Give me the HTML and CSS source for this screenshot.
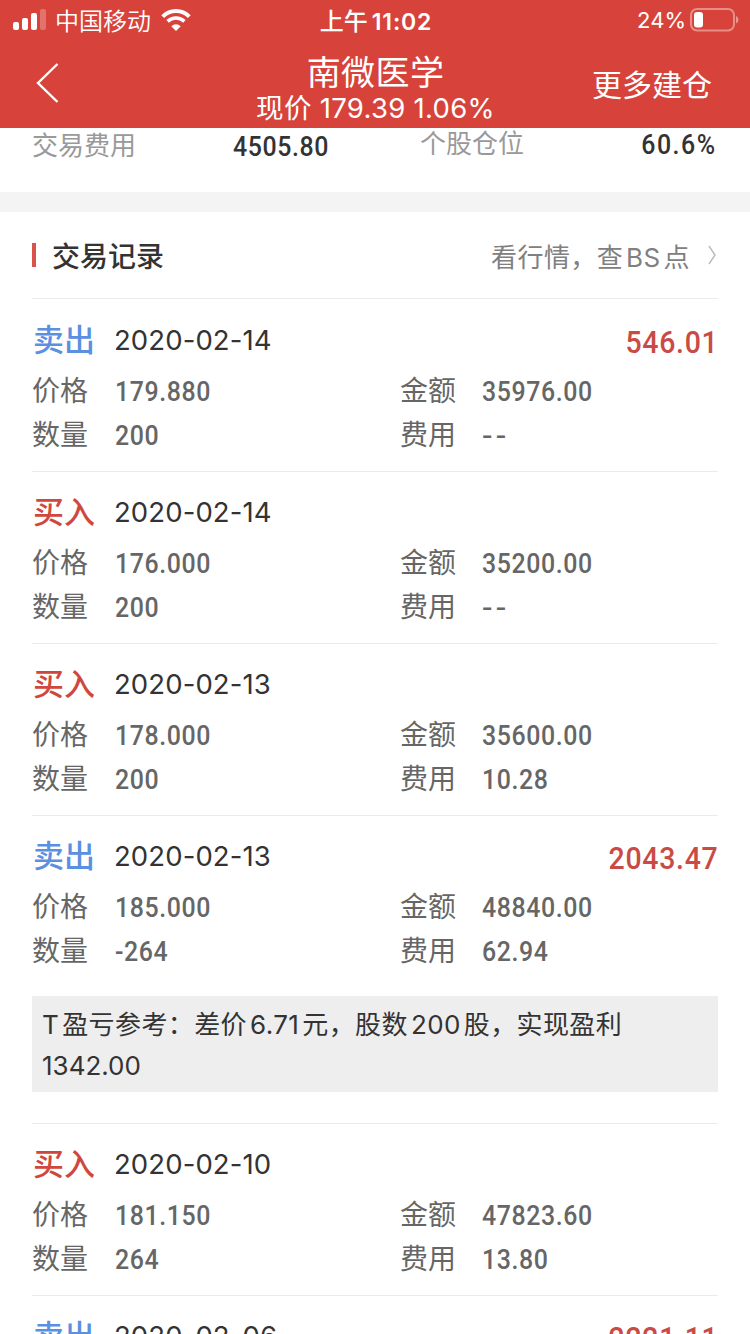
FILE: index.html
```html
<!DOCTYPE html>
<html lang="zh-CN">
  <head>
    <meta charset="UTF-8" />
    <meta name="viewport" content="width=device-width, initial-scale=1.0" />
    <title>南微医学</title>
    <link rel="stylesheet" href="styles.css">
  </head>
  <body>
    <header class="header">
      <div class="status-bar">
        <div class="status-left">
          <svg class="signal" width="34" height="22" viewBox="0 0 34 22" fill="#fff">
            <rect x="0" y="13" width="6" height="8" rx="2" />
            <rect x="9" y="9" width="6" height="12" rx="2" />
            <rect x="18" y="4" width="6" height="17" rx="2" />
            <rect x="27" y="0" width="6" height="21" rx="2" opacity="0.25" />
          </svg>
          <span class="carrier">中国移动</span>
          <svg class="wifi" width="30" height="22" viewBox="0 0 30 22">
            <path d="M1.7 7.6 A18.8 18.8 0 0 1 28.3 7.6" fill="none" stroke="#fff" stroke-width="4" />
            <path d="M6.6 12.4 A12 12 0 0 1 23.4 12.4" fill="none" stroke="#fff" stroke-width="3.6" />
            <path d="M15 22 L10.3 17.3 A6.7 6.7 0 0 1 19.7 17.3 Z" fill="#fff" />
          </svg>
        </div>
        <div class="status-time"><span class="ampm">上午</span>11:02</div>
        <div class="status-right">
          <span>24%</span>
          <svg width="49" height="24" viewBox="0 0 49 24">
            <rect x="1" y="1" width="43" height="21.5" rx="6" fill="none" stroke="#fff" stroke-opacity="0.4" stroke-width="2" />
            <rect x="4" y="4" width="9" height="15.5" rx="3" fill="#fff" />
            <path d="M46 8 Q48.5 9 48.5 11.7 Q48.5 14.5 46 15.5 Z" fill="#fff" opacity="0.45" />
          </svg>
        </div>
      </div>
      <div class="nav-bar">
        <svg class="back" width="24" height="42" viewBox="0 0 24 42">
          <path d="M22.5 2 L3 21 L22.5 40" fill="none" stroke="#fff" stroke-width="2.4" />
        </svg>
        <div class="nav-title">
          <div class="stock-name">南微医学</div>
          <div class="stock-price">现价 179.39 1.06%</div>
        </div>
        <div class="nav-action">更多建仓</div>
      </div>
    </header>

    <div class="summary">
      <span class="summary-label">交易费用</span>
      <span class="summary-value num">4505.80</span>
      <span class="summary-label up">个股仓位</span>
      <span class="summary-value num right up">60.6%</span>
    </div>

    <div class="records">
      <div class="records-header">
        <h2>交易记录</h2>
        <div class="quote-link">
          <span>看行情，查<span class="latin">BS</span>点</span>
          <svg width="10" height="20" viewBox="0 0 10 20">
            <path d="M1 1 L7 10 L1 19" fill="none" stroke="#bbb" stroke-width="1.4" />
          </svg>
        </div>
      </div>

      <div class="record">
        <div class="record-top">
          <span class="type sell">卖出</span>
          <span class="date">2020-02-14</span>
          <span class="profit num right">546.01</span>
        </div>
        <div class="record-grid">
          <span>价格</span><span class="num">179.880</span><span>金额</span><span class="num">35976.00</span>
          <span>数量</span><span class="num">200</span><span>费用</span><span class="num none">--</span>
        </div>
      </div>

      <div class="record">
        <div class="record-top">
          <span class="type buy">买入</span>
          <span class="date">2020-02-14</span>
        </div>
        <div class="record-grid">
          <span>价格</span><span class="num">176.000</span><span>金额</span><span class="num">35200.00</span>
          <span>数量</span><span class="num">200</span><span>费用</span><span class="num none">--</span>
        </div>
      </div>

      <div class="record">
        <div class="record-top">
          <span class="type buy">买入</span>
          <span class="date">2020-02-13</span>
        </div>
        <div class="record-grid">
          <span>价格</span><span class="num">178.000</span><span>金额</span><span class="num">35600.00</span>
          <span>数量</span><span class="num">200</span><span>费用</span><span class="num">10.28</span>
        </div>
      </div>

      <div class="record has-note">
        <div class="record-top">
          <span class="type sell">卖出</span>
          <span class="date">2020-02-13</span>
          <span class="profit num right">2043.47</span>
        </div>
        <div class="record-grid">
          <span>价格</span><span class="num">185.000</span><span>金额</span><span class="num">48840.00</span>
          <span>数量</span><span class="num">-264</span><span>费用</span><span class="num">62.94</span>
        </div>
        <div class="note"><span class="latin">T</span>盈亏参考：差价<span class="latin">6.71</span>元，股数<span class="latin">200</span>股，实现盈利<br><span class="total">1342.00</span></div>
      </div>

      <div class="record">
        <div class="record-top">
          <span class="type buy">买入</span>
          <span class="date">2020-02-10</span>
        </div>
        <div class="record-grid">
          <span>价格</span><span class="num">181.150</span><span>金额</span><span class="num">47823.60</span>
          <span>数量</span><span class="num">264</span><span>费用</span><span class="num">13.80</span>
        </div>
      </div>

      <div class="record">
        <div class="record-top">
          <span class="type sell">卖出</span>
          <span class="date">2020-02-06</span>
          <span class="profit num right">2221.11</span>
        </div>
      </div>
    </div>
  </body>
</html>
```

FILE: styles.css
```css
* {
  box-sizing: border-box;
}
body {
  margin: 0;
  height: 1334px;
  overflow: hidden;
  display: flex;
  flex-direction: column;
  font-family: Inter, "Noto Sans CJK SC", sans-serif;
  background: #fff;
  color: #333;
}
svg {
  display: block;
  flex: none;
}
/* condensed digits */
.num {
  font-family: Roboto, "Noto Sans CJK SC", sans-serif;
  font-weight: 500;
  letter-spacing: 0.024em;
  transform: scaleX(0.89);
  transform-origin: left center;
}
.num.right {
  transform-origin: right center;
}

/* header */
.header {
  flex: none;
  height: 128px;
  background: #d7433b;
  color: #fff;
}
.status-bar {
  display: grid;
  grid-template-columns: 1fr auto 1fr;
  align-items: center;
  height: 40px;
  padding: 0 11px 0 13px;
  font-size: 22px;
}
.status-left {
  display: flex;
  align-items: center;
}
.carrier {
  margin: 0 10px 0 8px;
  padding-bottom: 2px;
  font-size: 24px;
  font-weight: 350;
}
.status-time {
  padding-bottom: 2px;
  font-size: 23px;
  font-weight: 600;
  letter-spacing: 0.8px;
}
.ampm {
  margin-right: 4px;
  font-size: 24px;
  font-weight: 500;
  letter-spacing: 0;
}
.status-right {
  display: flex;
  justify-content: flex-end;
  align-items: center;
  gap: 4px;
}
.nav-bar {
  display: grid;
  grid-template-columns: 1fr auto 1fr;
  align-items: center;
  height: 88px;
  padding: 0 38px 2px 35px;
}
.nav-title {
  padding: 11px 0 0 4px;
  text-align: center;
}
.stock-name {
  font-size: 34px;
  line-height: 38px;
  letter-spacing: 0.4px;
}
.stock-price {
  font-size: 27.5px;
  line-height: 32px;
  letter-spacing: 0.3px;
}
.nav-action {
  justify-self: end;
  font-size: 30px;
}
.stock-name,
.stock-price,
.nav-action {
  font-weight: 370;
}

/* summary row */
.summary {
  flex: none;
  display: grid;
  grid-template-columns: 201px 187px 1fr auto;
  height: 84px;
  padding: 0 33px 0 32px;
  border-bottom: 20px solid #f4f4f4;
  font-size: 26px;
  line-height: 36px;
}
.summary-label {
  color: #999;
}
.summary-value {
  padding-top: 1px;
  font-size: 28px;
}
.summary .up {
  margin-top: -2px;
}
.summary .num.up {
  letter-spacing: 0.06em;
}

/* trade records */
.records {
  padding: 0 32px;
}
.records-header {
  display: flex;
  justify-content: space-between;
  align-items: center;
  height: 87px;
  margin-bottom: 1px;
  border-bottom: 1px solid #ebebeb;
}
.records-header h2 {
  display: flex;
  align-items: center;
  gap: 16px;
  margin: 0;
  font-size: 28px;
  font-weight: 500;
}
.records-header h2::before {
  content: "";
  width: 4px;
  height: 24px;
  background: #d9534a;
}
.quote-link {
  display: flex;
  align-items: center;
  gap: 18px;
  color: #808080;
  font-size: 26px;
  letter-spacing: 0.4px;
}
.latin {
  margin: 0 3px;
}
.record {
  height: 172px;
  padding-top: 16px;
  border-bottom: 1px solid #ebebeb;
}
.record.has-note {
  height: 308px;
}
.record-top {
  display: flex;
  align-items: center;
  height: 48px;
  margin-bottom: 5px;
}
.type {
  width: 82px;
  padding: 0 0 5px 1px;
  font-size: 31px;
  font-weight: 500;
}
.sell {
  color: #5b8fdf;
}
.buy {
  color: #d0473f;
}
.date {
  font-size: 27.5px;
  letter-spacing: 0.1px;
}
.profit {
  margin-left: auto;
  padding-top: 3px;
  color: #c94b45;
  font-size: 32px;
}
.record-grid {
  display: grid;
  grid-template-columns: 83px 285px 82px 1fr;
  color: #666;
  font-size: 28px;
  line-height: 44px;
}
.record-grid .num {
  padding-top: 1px;
  line-height: 43px;
}
.record-grid .none {
  letter-spacing: 3px;
  transform: scaleX(1.1);
}
.note {
  height: 96px;
  margin-top: 23px;
  padding: 8px 10px;
  background: #eee;
  font-size: 26px;
  line-height: 41px;
  letter-spacing: 0.4px;
  white-space: nowrap;
}
.note .latin:first-child {
  margin-left: 0;
}
.total {
  letter-spacing: 0;
}
```
